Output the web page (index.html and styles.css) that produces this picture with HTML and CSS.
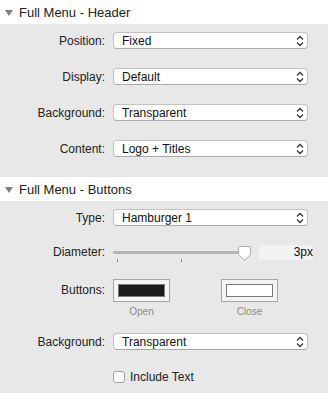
FILE: index.html
```html
<!DOCTYPE html>
<html lang="en">
<head>
  <meta charset="UTF-8" />
  <meta name="viewport" content="width=device-width, initial-scale=1" />
  <title>Full Menu</title>
  <link rel="stylesheet" href="styles.css">
</head>
<body>
  <div class="section">
    <div class="section-head"><span class="caret"></span>Full Menu - Header</div>
    <div class="panel panel-header">
      <div class="row">
        <div class="label">Position:</div>
        <div class="select"><span>Fixed</span>
          <svg class="chev" width="8" height="12" viewBox="0 0 8 12"><path d="M1 4.5 L4 1.5 L7 4.5 M1 7.5 L4 10.5 L7 7.5" /></svg>
        </div>
      </div>
      <div class="row">
        <div class="label">Display:</div>
        <div class="select"><span>Default</span>
          <svg class="chev" width="8" height="12" viewBox="0 0 8 12"><path d="M1 4.5 L4 1.5 L7 4.5 M1 7.5 L4 10.5 L7 7.5" /></svg>
        </div>
      </div>
      <div class="row">
        <div class="label">Background:</div>
        <div class="select"><span>Transparent</span>
          <svg class="chev" width="8" height="12" viewBox="0 0 8 12"><path d="M1 4.5 L4 1.5 L7 4.5 M1 7.5 L4 10.5 L7 7.5" /></svg>
        </div>
      </div>
      <div class="row">
        <div class="label">Content:</div>
        <div class="select"><span>Logo + Titles</span>
          <svg class="chev" width="8" height="12" viewBox="0 0 8 12"><path d="M1 4.5 L4 1.5 L7 4.5 M1 7.5 L4 10.5 L7 7.5" /></svg>
        </div>
      </div>
    </div>
  </div>

  <div class="section">
    <div class="section-head"><span class="caret"></span>Full Menu - Buttons</div>
    <div class="panel panel-buttons">
      <div class="row row-type">
        <div class="label">Type:</div>
        <div class="select"><span>Hamburger 1</span>
          <svg class="chev" width="8" height="12" viewBox="0 0 8 12"><path d="M1 4.5 L4 1.5 L7 4.5 M1 7.5 L4 10.5 L7 7.5" /></svg>
        </div>
      </div>
      <div class="row row-slider">
        <div class="label">Diameter:</div>
        <div class="slider">
          <div class="track"></div>
          <span class="tick tick-1"></span>
          <span class="tick tick-2"></span>
          <svg class="thumb" width="13" height="15" viewBox="0 0 13 15"><path d="M2 0.5 H11 Q12.5 0.5 12.5 2 V8.5 L6.5 14.3 L0.5 8.5 V2 Q0.5 0.5 2 0.5Z" /></svg>
        </div>
        <div class="value">3px</div>
      </div>
      <div class="row row-wells">
        <div class="label">Buttons:</div>
        <div class="well-group">
          <div class="well"><span class="swatch swatch-dark"></span></div>
          <div class="caption">Open</div>
        </div>
        <div class="well-group">
          <div class="well"><span class="swatch swatch-light"></span></div>
          <div class="caption">Close</div>
        </div>
      </div>
      <div class="row row-bg">
        <div class="label">Background:</div>
        <div class="select"><span>Transparent</span>
          <svg class="chev" width="8" height="12" viewBox="0 0 8 12"><path d="M1 4.5 L4 1.5 L7 4.5 M1 7.5 L4 10.5 L7 7.5" /></svg>
        </div>
      </div>
      <div class="row row-check">
        <span class="checkbox"></span>
        <span class="check-label">Include Text</span>
      </div>
    </div>
  </div>
</body>
</html>
```

FILE: styles.css
```css
html, body {
  margin: 0;
  padding: 0;
  background: #e8e8e8;
  color: #222;
  font-family: 'Liberation Sans', Arial, sans-serif;
  font-size: 12px;
}

.section-head {
  height: 24px;
  display: flex;
  align-items: center;
  background: #fff;
  font-size: 13px;
  color: #222;
}

.caret {
  width: 0;
  height: 0;
  border-left: 4px solid transparent;
  border-right: 4px solid transparent;
  border-top: 6px solid #808080;
  margin: 1px 6px 0 5px;
}

.panel {
  display: flex;
  flex-direction: column;
}

.panel-header {
  padding: 8px 0 20px;
  gap: 19px;
}

.row {
  display: flex;
  align-items: center;
  padding-right: 20px;
}

.label {
  width: 105px;
  margin-right: 8px;
  text-align: right;
  flex: 0 0 auto;
}

.select {
  flex: 1;
  height: 17px;
  box-sizing: border-box;
  display: flex;
  align-items: center;
  justify-content: space-between;
  padding: 0 3px 0 8px;
  background: #fff;
  border: 1px solid #c3c3c3;
  border-bottom-color: #a9a9a9;
  border-radius: 4px;
  color: #111;
}

.chev path {
  fill: none;
  stroke: #333;
  stroke-width: 1.3;
}

/* second panel */
.row-type {
  margin-top: 8px;
}

.row-slider {
  margin-top: 16px;
  height: 20px;
  padding-right: 15px;
}

.slider {
  position: relative;
  width: 137px;
  height: 20px;
}

.track {
  position: absolute;
  left: 0; right: 0;
  top: 9px;
  height: 3px;
  border-radius: 2px;
  background: #b4b4b4;
}

.tick {
  position: absolute;
  top: 17px;
  width: 1px;
  height: 3px;
  background: #8c8c8c;
}

.tick-1 { left: 4px; }
.tick-2 { left: 68px; }

.thumb {
  position: absolute;
  left: 125px;
  top: 4px;
}

.thumb path {
  fill: #fff;
  stroke: #adadad;
  stroke-width: 1;
}

.value {
  margin-left: 9px;
  flex: 1;
  height: 15px;
  line-height: 15px;
  background: #f2f2f2;
  text-align: right;
  color: #111;
}

.row-wells {
  margin-top: 17px;
  align-items: flex-start;
}

.row-wells .label {
  line-height: 23px;
}

.well-group {
  display: flex;
  flex-direction: column;
  align-items: center;
  width: 57px;
}

.well-group + .well-group {
  margin-left: 51px;
}

.well {
  width: 57px;
  height: 23px;
  box-sizing: border-box;
  padding: 4px;
  border: 1px solid #a6a6a6;
  background: #f4f4f4;
  display: flex;
}

.swatch {
  flex: 1;
  border: 1px solid #7a7a7a;
}

.swatch-dark { background: #1b1b1b; }
.swatch-light { background: #fff; }

.caption {
  margin-top: 4px;
  font-size: 10px;
  line-height: 12px;
  color: #8a8a8a;
}

.row-bg {
  margin-top: 15px;
}

.row-check {
  margin-top: 20px;
  padding-left: 113px;
}

.checkbox {
  width: 12px;
  height: 12px;
  box-sizing: border-box;
  border: 1px solid #a3a3a3;
  border-radius: 3px;
  background: #fff;
}

.check-label {
  margin-left: 5px;
}
```
